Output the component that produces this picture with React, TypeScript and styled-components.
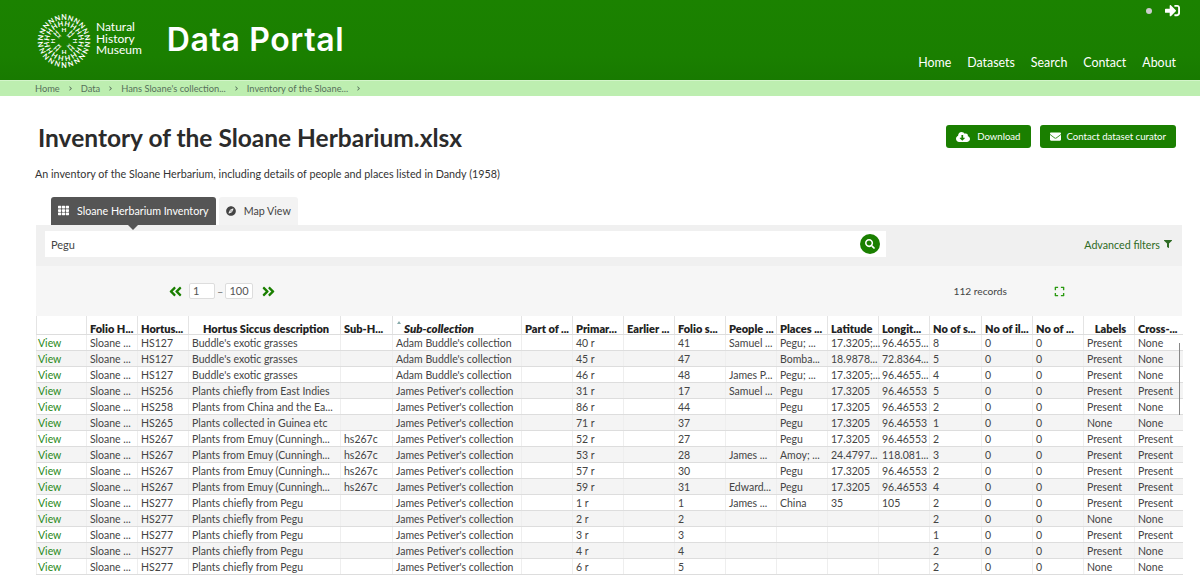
import styled, { createGlobalStyle } from "styled-components";
import {
  FaAngleDoubleLeft,
  FaAngleDoubleRight,
  FaChevronRight,
  FaCloudDownloadAlt,
  FaCompass,
  FaEnvelope,
  FaExpand,
  FaFilter,
  FaSearch,
  FaSignInAlt,
  FaTh,
} from "react-icons/fa";

const GREEN = "#1a7f00";

const GlobalStyle = createGlobalStyle`
  html, body {
    margin: 0;
    height: 100%;
    overflow: hidden;
    background: #fff;
  }
  body {
    font-family: "Lato", "Open Sans", sans-serif;
    color: #333;
  }
`;

const NAV_ITEMS = ["Home", "Datasets", "Search", "Contact", "About"];
const CRUMBS = ["Home", "Data", "Hans Sloane's collection...", "Inventory of the Sloane..."];

const COLUMNS = [
  { label: "", width: 50 },
  { label: "Folio H...", width: 51 },
  { label: "Hortus...", width: 51 },
  { label: "Hortus Siccus description", width: 152, centered: true },
  { label: "Sub-H...", width: 52 },
  { label: "Sub-collection", width: 129, sorted: true },
  { label: "Part of ...", width: 51 },
  { label: "Primar...", width: 51 },
  { label: "Earlier ...", width: 51 },
  { label: "Folio s...", width: 51 },
  { label: "People ...", width: 51 },
  { label: "Places ...", width: 51 },
  { label: "Latitude", width: 51 },
  { label: "Longit...", width: 51 },
  { label: "No of s...", width: 52 },
  { label: "No of il...", width: 51 },
  { label: "No of ...", width: 51 },
  { label: "Labels", width: 51, centered: true },
  { label: "Cross-...", width: 48 },
];

const BUDDLE = "Buddle's exotic grasses";
const ADAM = "Adam Buddle's collection";
const JAMES = "James Petiver's collection";
const EMUY = "Plants from Emuy (Cunningh...";
const CHIEFLY = "Plants chiefly from Pegu";

// hortus, description, sub-h, sub-collection, primary, folio, people, places, lat, long, specimens, labels, cross
const ROWS = [
  ["HS127", BUDDLE, "", ADAM, "40 r", "41", "Samuel ...", "Pegu; ...", "17.3205;...", "96.4655...", "8", "Present", "None"],
  ["HS127", BUDDLE, "", ADAM, "45 r", "47", "", "Bomba...", "18.9878...", "72.8364...", "5", "Present", "None"],
  ["HS127", BUDDLE, "", ADAM, "46 r", "48", "James P...", "Pegu; ...", "17.3205;...", "96.4655...", "4", "Present", "None"],
  ["HS256", "Plants chiefly from East Indies", "", JAMES, "31 r", "17", "Samuel ...", "Pegu", "17.3205", "96.46553", "5", "Present", "Present"],
  ["HS258", "Plants from China and the Ea...", "", JAMES, "86 r", "44", "", "Pegu", "17.3205", "96.46553", "2", "Present", "None"],
  ["HS265", "Plants collected in Guinea etc", "", JAMES, "71 r", "37", "", "Pegu", "17.3205", "96.46553", "1", "None", "None"],
  ["HS267", EMUY, "hs267c", JAMES, "52 r", "27", "", "Pegu", "17.3205", "96.46553", "2", "Present", "Present"],
  ["HS267", EMUY, "hs267c", JAMES, "53 r", "28", "James ...", "Amoy; ...", "24.4797...", "118.081...", "3", "Present", "Present"],
  ["HS267", EMUY, "hs267c", JAMES, "57 r", "30", "", "Pegu", "17.3205", "96.46553", "2", "Present", "Present"],
  ["HS267", EMUY, "hs267c", JAMES, "59 r", "31", "Edward...", "Pegu", "17.3205", "96.46553", "4", "Present", "Present"],
  ["HS277", CHIEFLY, "", JAMES, "1 r", "1", "James ...", "China", "35", "105", "2", "Present", "Present"],
  ["HS277", CHIEFLY, "", JAMES, "2 r", "2", "", "", "", "", "2", "None", "None"],
  ["HS277", CHIEFLY, "", JAMES, "3 r", "3", "", "", "", "", "1", "Present", "Present"],
  ["HS277", CHIEFLY, "", JAMES, "4 r", "4", "", "", "", "", "2", "Present", "None"],
  ["HS277", CHIEFLY, "", JAMES, "6 r", "5", "", "", "", "", "2", "None", "None"],
];

function LogoMark() {
  const ring = (letter: string, count: number, radius: number, size: number, offset = 0) =>
    Array.from({ length: count }, (_, i) => {
      const angle = (360 / count) * i + offset;
      return (
        <text
          key={`${letter}${radius}${i}`}
          x="32"
          y={32 - radius}
          fontSize={size}
          fontWeight="700"
          textAnchor="middle"
          dominantBaseline="central"
          fill="#fff"
          transform={`rotate(${angle} 32 32)`}
        >
          {letter}
        </text>
      );
    });

  return (
    <svg width="54" height="54" viewBox="0 0 64 64" aria-hidden="true">
      {ring("N", 22, 28, 8.5)}
      {ring("H", 16, 20.5, 8.5, 11)}
      {ring("H", 8, 13.5, 7.5)}
      {ring("M", 4, 8, 5, 45)}
    </svg>
  );
}

export default function App() {
  return (
    <Page>
      <GlobalStyle />
      <Header>
        <Brand>
          <LogoMark />
          <MuseumName>
            <MuseumLine>Natural</MuseumLine>
            <MuseumLine>History</MuseumLine>
            <MuseumLine>Museum</MuseumLine>
          </MuseumName>
          <PortalName>Data Portal</PortalName>
        </Brand>
        <HeaderRight>
          <UserBar>
            <UserDot />
            <FaSignInAlt size={15} />
          </UserBar>
          <Nav>
            {NAV_ITEMS.map((item) => (
              <NavLink key={item}>{item}</NavLink>
            ))}
          </Nav>
        </HeaderRight>
      </Header>
      <Breadcrumb>
        {CRUMBS.map((crumb) => (
          <Crumb key={crumb}>
            {crumb}
            <FaChevronRight size={5} />
          </Crumb>
        ))}
      </Breadcrumb>
      <TitleRow>
        <Title>Inventory of the Sloane Herbarium.xlsx</Title>
        <Actions>
          <ActionButton $wide={false}>
            <FaCloudDownloadAlt size={14} />
            Download
          </ActionButton>
          <ActionButton $wide>
            <FaEnvelope size={11} />
            Contact dataset curator
          </ActionButton>
        </Actions>
      </TitleRow>
      <Description>
        An inventory of the Sloane Herbarium, including details of people and places listed in Dandy (1958)
      </Description>
      <Tabs>
        <Tab $active>
          <FaTh size={11} />
          Sloane Herbarium Inventory
        </Tab>
        <Tab $active={false}>
          <FaCompass size={10} />
          Map View
        </Tab>
      </Tabs>
      <Explorer>
        <FilterBar>
          <SearchBox>
            <SearchText>Pegu</SearchText>
            <SearchButton>
              <FaSearch size={10} />
            </SearchButton>
          </SearchBox>
          <AdvancedFilters>
            Advanced filters
            <FaFilter size={8} />
          </AdvancedFilters>
        </FilterBar>
        <PagerBar>
          <PagerArrow $next={false}>
            <FaAngleDoubleLeft size={15} />
          </PagerArrow>
          <PageInput>1</PageInput>
          <PageDash>–</PageDash>
          <PageInput>100</PageInput>
          <PagerArrow $next>
            <FaAngleDoubleRight size={15} />
          </PagerArrow>
          <Records>112 records</Records>
          <FullScreen>
            <FaExpand size={11} />
          </FullScreen>
        </PagerBar>
        <TableWrap>
          <Grid>
            <colgroup>
              {COLUMNS.map((column, i) => (
                <col key={i} width={column.width} />
              ))}
            </colgroup>
            <thead>
              <tr>
                {COLUMNS.map((column, i) => (
                  <HeadCell key={i} $centered={!!column.centered} $sorted={!!column.sorted}>
                    {column.label}
                  </HeadCell>
                ))}
              </tr>
            </thead>
            <tbody>
              {ROWS.map((row, i) => (
                <BodyRow key={i} $striped={i % 2 === 1}>
                  <Cell>
                    <ViewLink>View</ViewLink>
                  </Cell>
                  <Cell>Sloane ...</Cell>
                  <Cell>{row[0]}</Cell>
                  <Cell>{row[1]}</Cell>
                  <Cell>{row[2]}</Cell>
                  <Cell>{row[3]}</Cell>
                  <Cell />
                  <Cell>{row[4]}</Cell>
                  <Cell />
                  <Cell>{row[5]}</Cell>
                  <Cell>{row[6]}</Cell>
                  <Cell>{row[7]}</Cell>
                  <Cell>{row[8]}</Cell>
                  <Cell>{row[9]}</Cell>
                  <Cell>{row[10]}</Cell>
                  <Cell>0</Cell>
                  <Cell>0</Cell>
                  <Cell>{row[11]}</Cell>
                  <Cell>{row[12]}</Cell>
                </BodyRow>
              ))}
            </tbody>
          </Grid>
          <ScrollThumb />
        </TableWrap>
      </Explorer>
    </Page>
  );
}

const Page = styled.div`
  height: 575px;
  overflow: hidden;
`;

const Header = styled.header`
  height: 80px;
  display: flex;
  justify-content: space-between;
  padding: 0 24px 0 37px;
  box-sizing: border-box;
  background: linear-gradient(180deg, #1b8200 0%, #1a7f00 70%, #187a00 100%);
  color: #fff;
`;

const Brand = styled.div`
  display: flex;
  align-items: center;
  padding-top: 2px;
`;

const MuseumName = styled.div`
  margin: 0 0 5px 5px;
  font-size: 12px;
  font-weight: 400;
`;

const MuseumLine = styled.div`
  height: 11.5px;
  line-height: 11.5px;
`;

const PortalName = styled.div`
  margin: 0 0 3px 25px;
  font-family: "Inter", sans-serif;
  font-size: 32px;
  font-weight: 600;
  letter-spacing: 0.6px;
`;

const HeaderRight = styled.div`
  display: flex;
  flex-direction: column;
  justify-content: space-between;
  align-items: flex-end;
  padding: 3px 0 9px;
`;

const UserBar = styled.div`
  display: flex;
  align-items: center;
  gap: 13px;
  margin-right: -4px;
`;

const UserDot = styled.span`
  width: 6px;
  height: 6px;
  border-radius: 50%;
  background: #ccc;
`;

const Nav = styled.nav`
  display: flex;
  gap: 16px;
`;

const NavLink = styled.a`
  font-size: 12.4px;
  line-height: 16px;
`;

const Breadcrumb = styled.div`
  height: 16px;
  display: flex;
  align-items: center;
  box-sizing: border-box;
  padding-left: 35px;
  background: #bdeeb0;
  border-top: 1px solid #d3f5ca;
  font-size: 9.3px;
  color: #56705a;
`;

const Crumb = styled.span`
  display: flex;
  align-items: center;
  gap: 8px;
  margin-right: 8px;
`;

const TitleRow = styled.div`
  display: flex;
  justify-content: space-between;
  align-items: flex-start;
  padding: 28px 24px 0 38px;
`;

const Title = styled.h1`
  margin: 0;
  font-size: 24.5px;
  line-height: 28px;
  font-weight: 700;
  color: #2b2b2b;
`;

const Actions = styled.div`
  display: flex;
  gap: 9px;
  padding-top: 1px;
`;

const ActionButton = styled.a<{ $wide: boolean }>`
  height: 23px;
  display: flex;
  align-items: center;
  gap: ${(p) => (p.$wide ? "6px" : "7px")};
  padding: 0 10px;
  border-radius: 3px;
  background: ${GREEN};
  color: #fff;
  font-size: 9.6px;
`;

const Description = styled.p`
  margin: 14px 0 0 35px;
  font-size: 10.75px;
  line-height: 16px;
  color: #333;
`;

const Tabs = styled.div`
  display: flex;
  gap: 3px;
  margin: 15px 0 0 51px;
`;

const Tab = styled.div<{ $active: boolean }>`
  position: relative;
  height: 28px;
  display: flex;
  align-items: center;
  gap: 8px;
  padding: 0 7px 1px;
  box-sizing: border-box;
  border-radius: 3px 3px 0 0;
  font-size: 10.7px;
  background: ${(p) => (p.$active ? "#555" : "#f3f3f3")};
  color: ${(p) => (p.$active ? "#fff" : "#444")};

  &::after {
    content: "";
    display: ${(p) => (p.$active ? "block" : "none")};
    position: absolute;
    left: 77px;
    bottom: -5px;
    border-left: 5px solid transparent;
    border-right: 5px solid transparent;
    border-top: 5px solid #555;
  }
`;

const Explorer = styled.div`
  margin-left: 36px;
  width: 1146px;
`;

const FilterBar = styled.div`
  height: 41px;
  display: flex;
  justify-content: space-between;
  align-items: flex-start;
  padding: 6px 10px 0 9px;
  box-sizing: border-box;
  background: #f0f0f0;
`;

const SearchBox = styled.div`
  width: 841px;
  height: 26px;
  display: flex;
  justify-content: space-between;
  align-items: center;
  padding: 0 6px;
  box-sizing: border-box;
  background: #fff;
`;

const SearchText = styled.span`
  font-size: 11px;
  color: #444;
`;

const SearchButton = styled.span`
  width: 20px;
  height: 20px;
  display: flex;
  align-items: center;
  justify-content: center;
  border-radius: 50%;
  background: ${GREEN};
  color: #fff;
`;

const AdvancedFilters = styled.a`
  display: flex;
  align-items: center;
  gap: 4px;
  height: 26px;
  font-size: 10.7px;
  color: #2f6b25;
`;

const PagerBar = styled.div`
  height: 50px;
  display: flex;
  align-items: center;
  padding-left: 127px;
  box-sizing: border-box;
  background: #f6f6f6;
  font-size: 11px;
`;

const PagerArrow = styled.a<{ $next: boolean }>`
  display: flex;
  color: ${GREEN};
  margin: 0 ${(p) => (p.$next ? "5px 0 8px" : "6px 0 5px")};
`;

const PageInput = styled.span`
  height: 14px;
  min-width: 18px;
  padding: 0 3px;
  line-height: 14px;
  border: 1px solid #ddd;
  border-radius: 2px;
  background: #fff;
  color: #555;
`;

const PageDash = styled.span`
  margin: 0 2px;
  color: #777;
`;

const Records = styled.span`
  margin-left: 673px;
  font-size: 10.2px;
  color: #444;
`;

const FullScreen = styled.a`
  display: flex;
  margin-left: 47px;
  color: #2a9a10;
`;

const TableWrap = styled.div`
  position: relative;
`;

const Grid = styled.table`
  width: 1146px;
  table-layout: fixed;
  border-collapse: collapse;
  background: #fff;
  font-size: 10.5px;
  color: #444;
`;

const HeadCell = styled.th<{ $centered: boolean; $sorted: boolean }>`
  position: relative;
  height: 18px;
  padding: 0 0 0 ${(p) => (p.$sorted ? "11px" : "3px")};
  box-sizing: border-box;
  vertical-align: bottom;
  border-left: 1px solid #e4e4e4;
  border-bottom: 1px solid #ddd;
  font-size: ${(p) => (p.$sorted ? "11.5px" : "11px")};
  line-height: 11px;
  font-weight: 800;
  font-style: ${(p) => (p.$sorted ? "italic" : "normal")};
  text-align: ${(p) => (p.$centered ? "center" : "left")};
  white-space: nowrap;
  color: #222;

  &::before {
    content: "";
    display: ${(p) => (p.$sorted ? "block" : "none")};
    position: absolute;
    left: 4px;
    top: 5px;
    border-left: 2.5px solid transparent;
    border-right: 2.5px solid transparent;
    border-bottom: 3px solid #8aa;
  }
`;

const BodyRow = styled.tr<{ $striped: boolean }>`
  height: 16px;
  background: ${(p) => (p.$striped ? "#f4f4f4" : "#fff")};
`;

const Cell = styled.td`
  height: 16px;
  padding: 1px 0 0 3px;
  box-sizing: border-box;
  border-left: 1px solid #eee;
  border-bottom: 1px solid #ddd;
  line-height: 14px;
  white-space: nowrap;
`;

const ViewLink = styled.a`
  margin-left: -2px;
  color: #2b8a1a;
`;

const ScrollThumb = styled.div`
  position: absolute;
  top: 27px;
  right: 2px;
  width: 1px;
  height: 72px;
  background: #888;
`;
